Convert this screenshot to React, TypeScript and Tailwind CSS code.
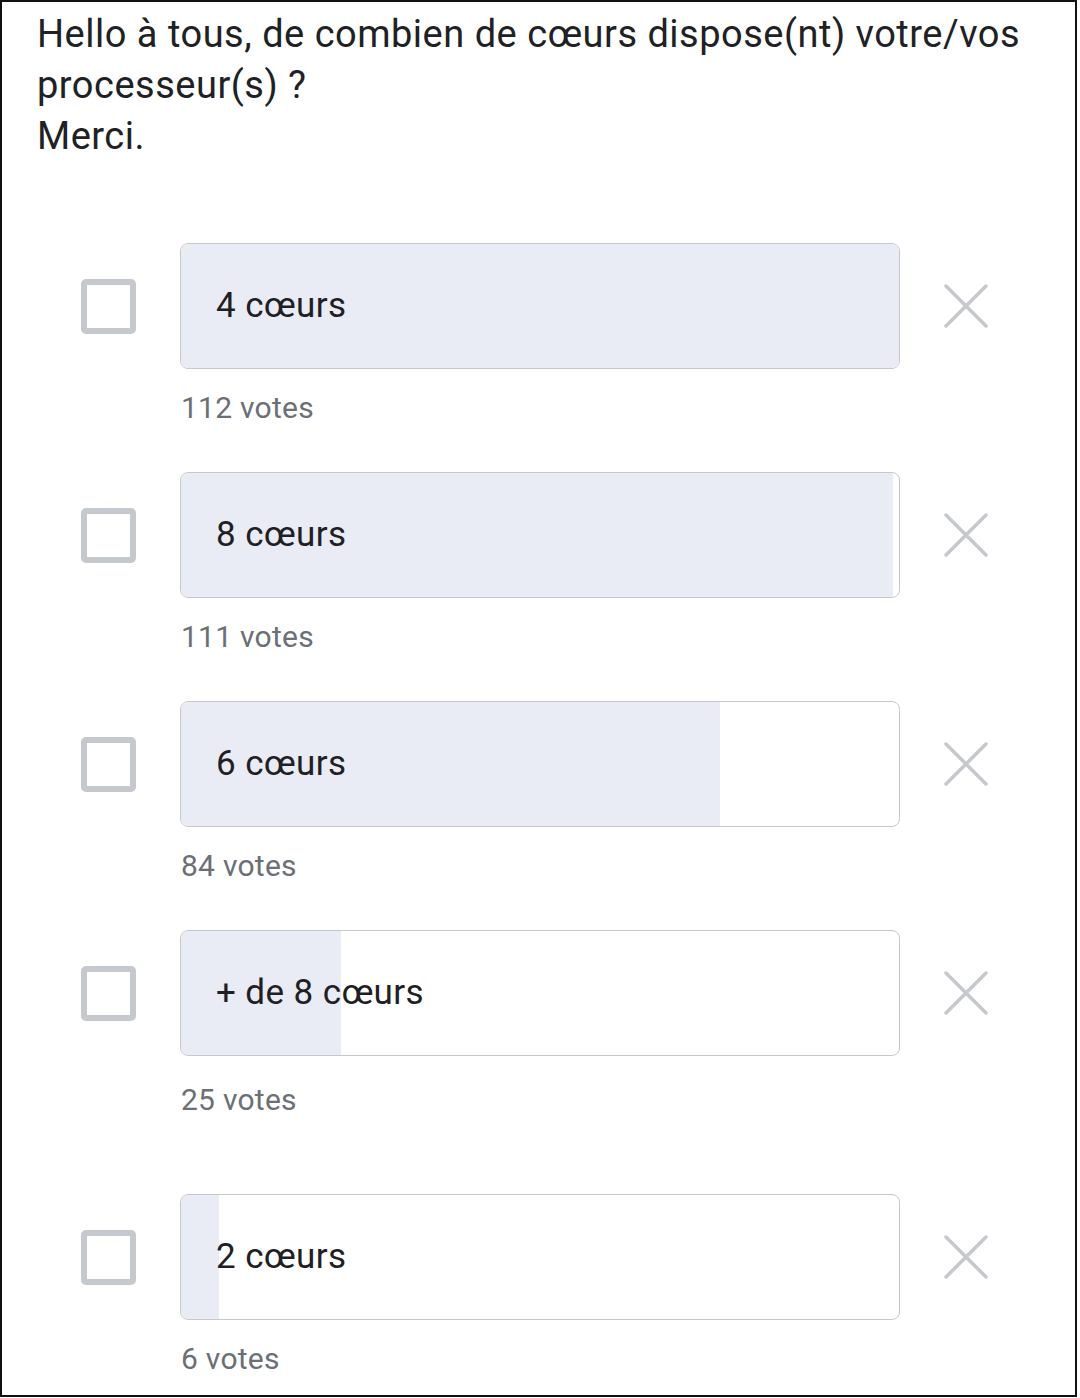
import React from 'react';

type Option = { label: string; votes: number };

const options: Option[] = [
  { label: '4 cœurs', votes: 112 },
  { label: '8 cœurs', votes: 111 },
  { label: '6 cœurs', votes: 84 },
  { label: '+ de 8 cœurs', votes: 25 },
  { label: '2 cœurs', votes: 6 },
];

const maxVotes = Math.max(...options.map((o) => o.votes));

const CloseIcon = () => (
  <svg width="44" height="44" viewBox="0 0 44 44" fill="none">
    <path d="M2 2L42 42M42 2L2 42" stroke="#c5c8cc" strokeWidth="3.5" strokeLinecap="round" />
  </svg>
);

const PollOption = ({
  option,
  className,
  votesClass = 'mt-[22px]',
}: {
  option: Option;
  className?: string;
  votesClass?: string;
}) => {
  const pct = (option.votes / maxVotes) * 100;
  return (
    <div className={className}>
      <div className="flex items-center pl-[79px]">
        <div className="h-[55px] w-[55px] shrink-0 rounded-[5px] border-[6px] border-[#c5c8cc] bg-white" />
        <div className="relative ml-[44px] h-[126px] w-[720px] shrink-0 overflow-hidden rounded-[8px] border border-[#c6c8cc] bg-white">
          <div className="absolute inset-y-0 left-0 bg-[#e9ecf4]" style={{ width: `${pct}%` }} />
          <div className="relative flex h-full items-center pl-[35px] text-[35px] tracking-[0.4px] text-[#1f2023]">
            {option.label}
          </div>
        </div>
        <div className="ml-[44px] flex shrink-0 items-center">
          <CloseIcon />
        </div>
      </div>
      <div className={`${votesClass} pl-[179px] text-[30px] leading-[34px] tracking-[0.25px] text-[#6b6f76]`}>
        {option.votes} votes
      </div>
    </div>
  );
};

export default function App() {
  return (
    <div className="h-[1397px] w-[1077px] overflow-hidden border-2 border-[#111] bg-white font-['Roboto',sans-serif]">
      <div className="pl-[35px] pt-[7px] text-[38px] leading-[51px] tracking-[0.5px] text-[#202124]">
        Hello à tous, de combien de cœurs dispose(nt) votre/vos
        <br />
        processeur(s) ?
        <br />
        Merci.
      </div>
      <div className="mt-[81px]">
        <PollOption option={options[0]} />
        <PollOption option={options[1]} className="mt-[47px]" />
        <PollOption option={options[2]} className="mt-[47px]" />
        <PollOption option={options[3]} className="mt-[47px]" votesClass="mt-[27px]" />
        <PollOption option={options[4]} className="mt-[77px]" />
      </div>
    </div>
  );
}
